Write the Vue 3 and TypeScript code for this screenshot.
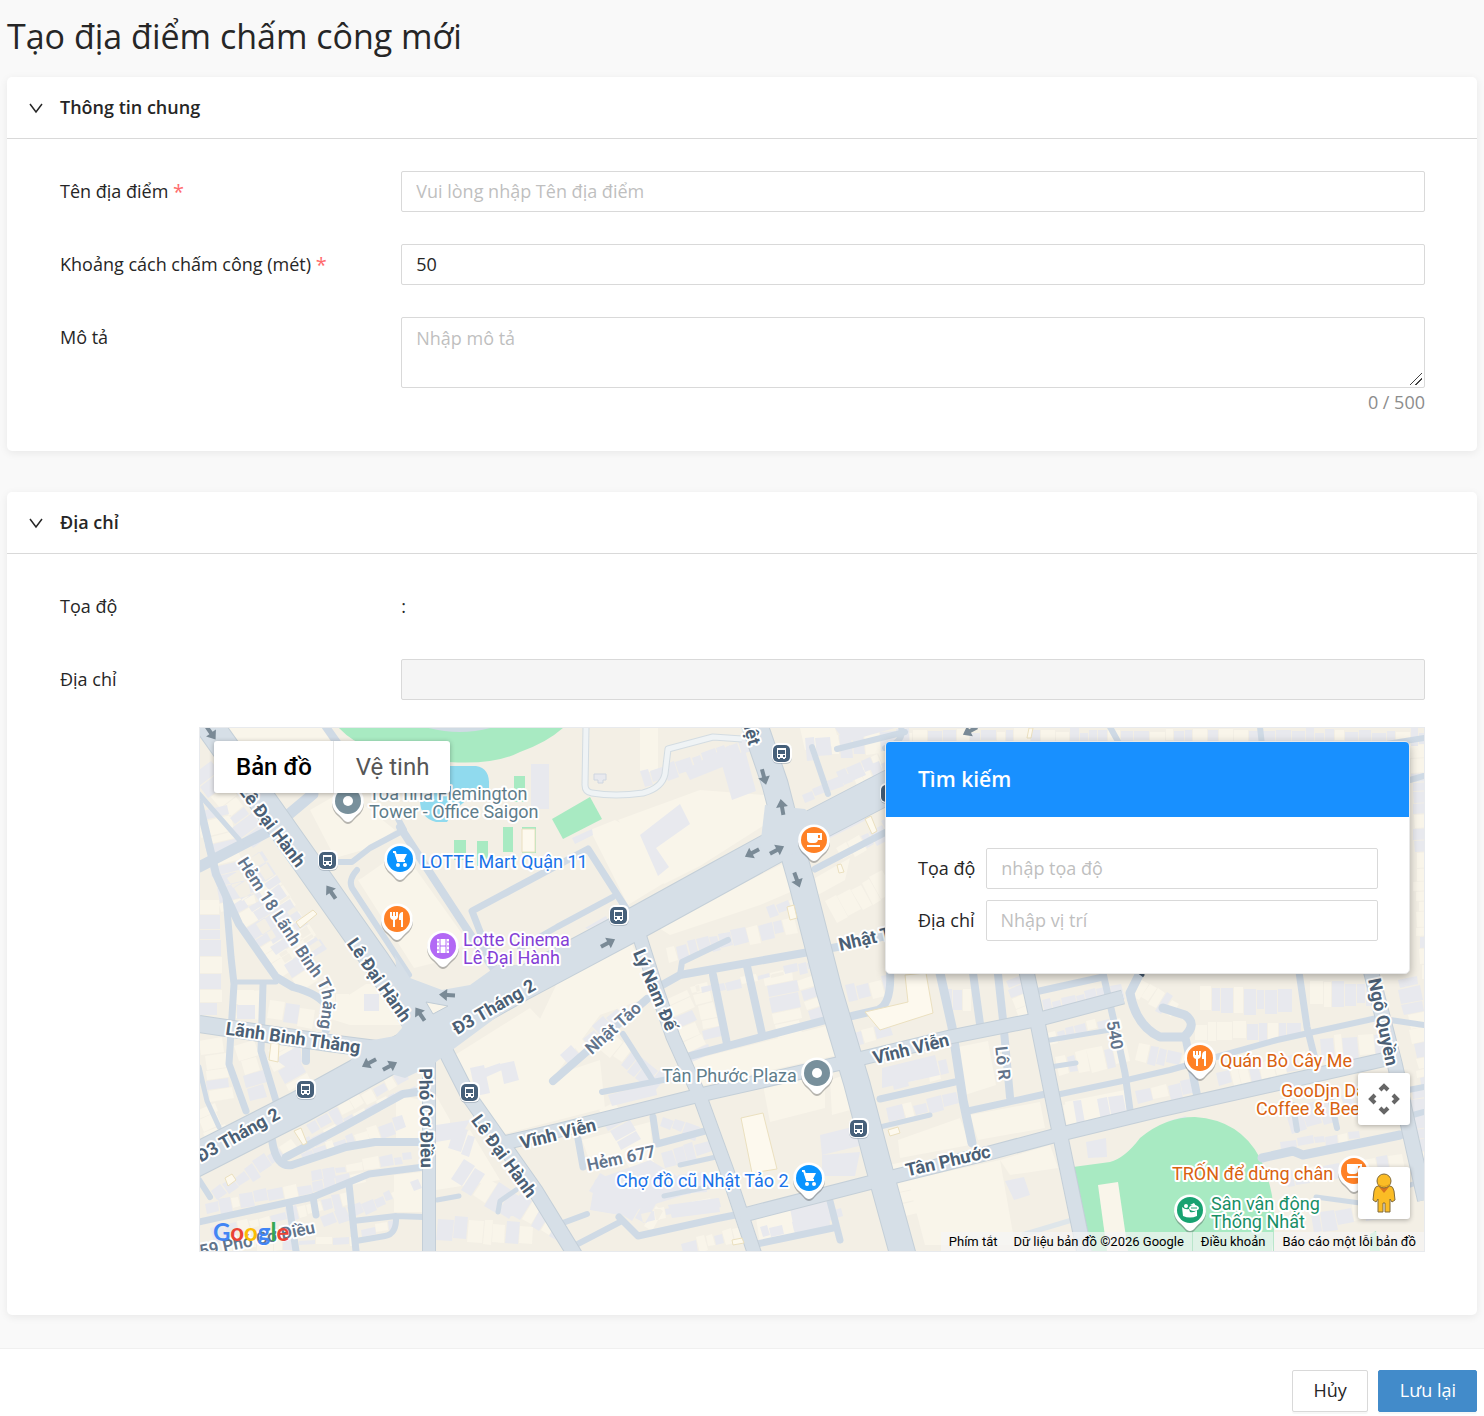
<script setup lang="ts">
import { computed, ref } from 'vue'

type Kind = 'place' | 'cart' | 'fork' | 'film' | 'cup' | 'stadium'

interface Street { d: string; w: number }
interface Label { t: string; x: number; y: number; r: number; c?: string }
interface Pin { x: number; y: number; kind: Kind }

const generalOpen = ref(true)
const addressOpen = ref(true)
const placeName = ref('')
const distance = ref('50')
const description = ref('')
const address = ref('')
const searchCoordinates = ref('')
const searchAddress = ref('')
const mapType = ref<'map' | 'satellite'>('map')
const counter = computed(() => `${description.value.length} / 500`)

/* Small streets */
const lanes: Street[] = [
  { d: 'M199 867L269 831L313 794', w: 11 },
  { d: 'M199 794L242 843', w: 5 },
  { d: 'M199 803L216 874L239 924L276 977L293 987Q320 994 328 1008L326 1030', w: 8 },
  { d: 'M226 897L231 957L234 984L229 1064L246 1111', w: 7 },
  { d: 'M236 982L276 982', w: 5 },
  { d: 'M263 984L261 1051L276 1101', w: 7 },
  { d: 'M306 1043L306 1061', w: 8 },
  { d: 'M199 1067L207 1101L219 1127', w: 5 },
  { d: 'M326 727L360 775', w: 8 },
  { d: 'M339 862L352 862L370 848L404 830L396 815', w: 6 },
  { d: 'M400 827L472 937L498 975', w: 8 },
  { d: 'M357 870Q348 880 352 888L409 975', w: 6 },
  { d: 'M495 970L472 911L500 896L588 849L627 910', w: 7 },
  { d: 'M520 948L557 927L613 897', w: 6 },
  { d: 'M837 749L905 732', w: 6 },
  { d: 'M812 747L828 794', w: 6 },
  { d: 'M815 869L888 831', w: 7 },
  { d: 'M655 989L680 975L843 946L890 935', w: 8 },
  { d: 'M680 975L682 962L728 940', w: 6 },
  { d: 'M713 975L727 1044', w: 8 },
  { d: 'M747 966L762 1034', w: 8 },
  { d: 'M690 1056L830 1019M852 1016L878 1010Q892 1004 890 970', w: 8 },
  { d: 'M553 1081L647 999', w: 8 },
  { d: 'M623 1034L653 1081M602 1092L668 1079', w: 6 },
  { d: 'M578 1139L583 1167M653 1117L657 1144L705 1131', w: 7 },
  { d: 'M680 1165L716 1157M664 1196L712 1186', w: 5 },
  { d: 'M560 1224L587 1214M572 1247L620 1222', w: 6 },
  { d: 'M619 1217L638 1236L715 1219L740 1214', w: 7 },
  { d: 'M757 1244L833 1228M830 1201L840 1240', w: 7 },
  { d: 'M286 1157L343 1127L403 1094L424 1091', w: 8 },
  { d: 'M272 1140Q276 1168 292 1165L346 1147L375 1142L424 1142', w: 8 },
  { d: 'M199 1222L313 1197L369 1174L424 1167', w: 7 },
  { d: 'M289 1204L296 1251M313 1197L316 1215M349 1184L356 1251', w: 7 },
  { d: 'M353 1221L396 1216L424 1217M396 1216Q397 1234 385 1236L356 1241', w: 6 },
  { d: 'M199 1180L210 1197', w: 6 },
  { d: 'M437 1200L459 1196M516 1190L500 1201L498 1212', w: 5 },
  { d: 'M940 973L952 1027L963 1100L972 1143', w: 9 },
  { d: 'M973 973L980 1024', w: 8 },
  { d: 'M997 965L1003 1020L1010 1097', w: 8 },
  { d: 'M880 1099L955 1082M968 1111L1050 1093', w: 7 },
  { d: 'M880 1127L930 1115', w: 5 },
  { d: 'M1035 992L1103 977', w: 7 },
  { d: 'M1100 960L1113 1017L1125 1073L1130 1110', w: 7 },
  { d: 'M1050 1040L1110 1030M1050 1067L1076 1063', w: 5 },
  { d: 'M1056 1095L1127 1080L1170 1070L1227 1054L1277 1040L1377 1018L1424 1025', w: 6 },
  { d: 'M1144 965L1130 993Q1136 1026 1160 1037L1184 1037Q1198 1024 1185 1015L1163 1008', w: 9 },
  { d: 'M1186 1040L1198 1100', w: 8 },
  { d: 'M1298 965L1307 1027L1317 1067', w: 7 },
  { d: 'M1262 1158L1293 1151L1303 1155L1400 1135', w: 9 },
  { d: 'M1316 1197L1360 1203L1424 1180', w: 5 },
  { d: 'M1293 1105L1297 1130M1330 1098L1337 1128', w: 6 },
  { d: 'M1398 1092L1424 1087M1402 1118L1424 1112', w: 6 },
  { d: 'M885 748Q905 742 901 727', w: 6 },
  { d: 'M1110 727L1120 745M1260 727L1262 745M1350 750L1424 738M1410 780L1424 776', w: 6 },
]

/* Through streets, drawn with an edge line */
const avenues: Street[] = [
  { d: 'M199 1024L329 1043L400 1052', w: 16 },
  { d: 'M440 1040L468 1095L535 1190L575 1255', w: 14 },
  { d: 'M429 1045L429 1255', w: 12 },
  { d: 'M495 1145L560 1130L700 1095L850 1061L950 1037L1040 1019L1123 997', w: 13 },
  { d: 'M636 925L655 985L673 1037L700 1097L727 1171L755 1255', w: 13 },
  { d: 'M740 1216L880 1180L993 1152L1057 1135L1160 1110L1400 1056', w: 13 },
  { d: 'M1024 960L1037 1020L1057 1120L1085 1255', w: 14 },
  { d: 'M1368 960L1395 1065L1407 1120L1425 1200', w: 14 },
  { d: 'M190 698L306 862L375 960L425 1035', w: 27 },
  { d: 'M190 1163L300 1107L400 1052L520 985L640 921L720 877L800 833L900 781', w: 32 },
  { d: 'M753 720L775 784L789 838L802 884L829 990L857 1084L878 1164L903 1255', w: 25 },
]

/* Repeatable pseudo-random sequence for the building lots */
function sequence(seed: number) {
  let s = seed
  return () => {
    s = (s * 16807) % 2147483647
    return s / 2147483647
  }
}

/* Rows of lots: from x1,y1 to x2,y2, then depth and seed */
const rows: number[][] = [
  [199, 812, 222, 905, -34, 3], [232, 905, 270, 968, -26, 5], [244, 862, 306, 960, -24, 7], [246, 866, 318, 978, 24, 8],
  [262, 850, 322, 938, 20, 9], [212, 760, 262, 826, 26, 11], [199, 900, 199, 1010, -24, 12], [238, 990, 238, 1020, -18, 13],
  [270, 1000, 310, 1006, 24, 14], [203, 1040, 212, 1100, -22, 15], [236, 1045, 252, 1100, -20, 16], [268, 1050, 290, 1090, -24, 17],
  [199, 1110, 216, 1150, -20, 18], [326, 990, 366, 990, 26, 19], [305, 1122, 400, 1070, 16, 21], [300, 1140, 405, 1086, 13, 22],
  [300, 1150, 410, 1112, 17, 23], [310, 1168, 410, 1150, 15, 24], [210, 1190, 280, 1142, 18, 25], [204, 1200, 350, 1172, 18, 26],
  [210, 1226, 345, 1192, 17, 27], [320, 1216, 415, 1178, 17, 28], [360, 1226, 390, 1220, 14, 29], [204, 1240, 350, 1235, 14, 30],
  [560, 1055, 620, 1000, 20, 31], [600, 1045, 650, 1085, -20, 32], [665, 1000, 690, 1055, -24, 33], [695, 985, 708, 1040, -16, 34],
  [665, 945, 790, 915, 20, 35], [690, 985, 830, 955, 14, 36], [768, 975, 778, 1025, -28, 37], [800, 980, 812, 1015, -20, 38],
  [600, 1110, 640, 1180, -22, 39], [665, 1112, 700, 1125, 18, 40], [660, 1150, 712, 1136, 20, 41], [640, 1175, 700, 1170, 24, 42],
  [640, 1210, 715, 1195, 16, 43], [510, 1210, 560, 1240, -20, 44], [590, 1190, 650, 1225, -24, 45], [680, 1240, 740, 1225, 18, 46],
  [890, 1070, 945, 1058, 20, 47], [886, 1108, 950, 1092, 18, 48], [945, 985, 965, 985, 30, 49], [1008, 980, 1020, 1010, -18, 50],
  [1042, 1000, 1110, 985, 22, 51], [1046, 1030, 1110, 1015, 16, 52], [1055, 1055, 1115, 1042, 26, 53], [1062, 1100, 1120, 1090, 36, 54],
  [1140, 1040, 1185, 1050, 22, 55], [1200, 985, 1290, 985, 30, 56], [1195, 1020, 1295, 1020, 22, 57], [1140, 975, 1180, 1000, 22, 58],
  [1310, 980, 1370, 980, 28, 59], [1320, 1035, 1380, 1030, 28, 60], [1215, 1070, 1300, 1050, 22, 61], [1135, 1090, 1180, 1080, 18, 62],
  [1285, 1110, 1350, 1090, 26, 63], [1280, 1140, 1350, 1130, 14, 64], [1285, 1170, 1395, 1152, 20, 65], [1310, 1210, 1400, 1195, 24, 66],
  [1400, 980, 1422, 1080, -22, 67], [1412, 1090, 1424, 1170, -16, 68], [805, 735, 900, 728, 26, 69], [835, 770, 885, 748, 18, 70],
  [800, 790, 880, 760, 16, 71], [835, 845, 890, 815, 22, 72], [825, 900, 880, 870, 30, 73], [900, 728, 1420, 728, 18, 74],
  [1412, 745, 1422, 970, -20, 75], [890, 1165, 900, 1210, -20, 76], [455, 1070, 500, 1060, 30, 77], [440, 1120, 470, 1130, 28, 78],
  [438, 1170, 500, 1210, -24, 79], [438, 1215, 530, 1222, 26, 80], [760, 1225, 830, 1208, 16, 81], [640, 770, 740, 738, 20, 82],
  [765, 905, 790, 895, 18, 84], [845, 985, 885, 975, 20, 85], [850, 1030, 880, 1022, 22, 86],
]

function buildLots() {
  const cream: string[] = []
  const grey: string[] = []
  for (const [x1, y1, x2, y2, depth, seed] of rows) {
    const next = sequence(seed * 7919)
    const length = Math.hypot(x2 - x1, y2 - y1)
    const ux = (x2 - x1) / length
    const uy = (y2 - y1) / length
    let at = 0
    while (at < length) {
      const w = 7 + Math.round(next() * 9)
      const start = Math.round(next() * 5)
      const end = depth - Math.sign(depth) * Math.round(next() * 6)
      const point = (a: number, b: number) => `${Math.round(x1 + ux * a - uy * b)} ${Math.round(y1 + uy * a + ux * b)}`
      const d = `M${point(at, start)}L${point(at + w, start)}L${point(at + w, end)}L${point(at, end)}Z`
      if (next() < 0.6) grey.push(d)
      else cream.push(d)
      at += w + 1
    }
  }
  return { cream: cream.join(''), grey: grey.join('') }
}
const lots = buildLots()

/* Large building plots */
const plots = [
  'M220 728L322 728L352 775L252 775Z', 'M310 810L345 790L395 830L370 848L335 858Z', 'M362 878L402 850L468 942L438 962L414 968L358 880Z',
  'M590 830L615 820L695 864L628 905Z', 'M618 820L700 790L765 795L769 822L700 866L664 884Z', 'M640 728L658 728L658 772L640 772Z',
  'M560 977L630 940L655 995L600 1015L553 1078L530 1040Z', 'M455 1055L530 1008L560 1040L550 1110L500 1135L478 1105L446 1048Z',
  'M500 1140L540 1080L600 1060L605 1108L500 1135Z', 'M659 928L740 885L782 864L795 890L760 905L670 935Z', 'M692 1060L830 1025L838 1055L700 1086Z',
  'M763 1085L825 1072L825 1108L770 1122Z', 'M830 1080L842 1076L850 1110L832 1115Z', 'M582 1140L650 1122L652 1145L590 1162Z',
  'M756 1218L792 1208L796 1235L760 1243Z', 'M958 1047L988 1041L996 1085L965 1095Z', 'M970 1115L1040 1102L1045 1128L978 1140Z',
  'M908 1180L1000 1160L1015 1245L925 1245Z', 'M1000 1160L1050 1145L1058 1168L1010 1175Z', 'M1065 1102L1125 1090L1130 1110L1068 1128Z',
  'M898 1140L960 1118L970 1145L900 1158Z', 'M815 878L850 858L845 880L816 896Z', 'M240 992L262 990L262 1020L236 1018Z',
  'M366 984L396 984L402 1025L350 1025L318 1015Z', 'M394 1175L422 1172L422 1212L394 1212Z', 'M396 1095L422 1100L422 1138L396 1138Z',
  'M404 1065L418 1064L450 1120L450 1150L436 1160L436 1080Z', 'M436 1145L470 1130L500 1180L436 1190Z', 'M800 728L835 728L840 745L805 750Z',
]
const greyPlots = [
  'M640 835L680 804L690 824L656 848L669 867L658 876Z', 'M722 765L745 750L756 791L732 800Z', 'M685 770L730 745L730 764L690 780Z', 'M531 764L549 764L549 809L531 809Z',
  'M608 1095L655 1083L657 1095L612 1106Z', 'M820 1135L860 1125L863 1145L822 1155Z', 'M822 1155L860 1152L855 1176L822 1176Z',
  'M882 1068L935 1055L940 1075L882 1088Z', 'M790 1208L828 1201L830 1225L795 1235Z', 'M595 1180L650 1160L700 1190L620 1215L590 1210Z',
  'M668 1205L718 1198L720 1212L672 1218Z', 'M1086 1142L1106 1138L1107 1157L1088 1158Z', 'M1005 1181L1024 1177L1030 1195L1014 1200Z', 'M1240 1155L1251 1149L1261 1160L1256 1170Z',
  'M818 830L866 807L870 818L826 840Z', 'M835 728L895 728L845 742Z', 'M572 838L592 829L593 835L575 844Z', 'M480 1070L500 1063L502 1070L484 1078Z',
  'M280 1056L300 1045L302 1062L290 1070L276 1060Z', 'M436 1125L470 1120L460 1138L436 1142Z', 'M1168 1121L1186 1116L1187 1120L1170 1124Z', 'M585 928L606 916L608 920L588 929Z',
]
const landmarks = [
  'M741 1118L763 1113L777 1169L752 1173Z', 'M865 1012L908 1002L905 975L926 973L933 1013L880 1030Z', 'M296 922L313 910L317 914L300 928Z', 'M522 829L535 829L535 852L522 852Z',
  'M271 1043L279 1044L278 1062L269 1060Z', 'M865 819L871 816L877 831L872 834Z', 'M787 907L794 905L797 918L790 920Z', 'M837 865L841 864L844 872L839 873Z', 'M225 1178L232 1174L236 1180L228 1186Z',
  'M294 1131L301 1128L307 1143L303 1145Z', 'M1029 728L1033 728L1031 738L1027 738Z', 'M732 1240L742 1238L744 1243L733 1245Z', 'M888 1130L898 1127L900 1133L890 1136Z',
]

const arrows: number[][] = [
  [211, 733, 55], [331, 892, -125], [764, 777, 75], [782, 807, -100], [752, 853, 152], [777, 850, -28], [797, 880, 70],
  [608, 943, -28], [447, 995, 183], [420, 1014, -125], [369, 1063, 152], [390, 1066, -28], [970, 731, 152],
]
const buses: number[][] = [[328, 860], [782, 753], [619, 915], [306, 1089], [470, 1092], [859, 1128], [890, 793]]

const streetNames: Label[] = [
  { t: 'Lê Đại Hành', x: 272, y: 826, r: 53 },
  { t: 'Lê Đại Hành', x: 379, y: 980, r: 55 },
  { t: 'Lê Đại Hành', x: 504, y: 1156, r: 54 },
  { t: 'Lãnh Binh Thăng', x: 293, y: 1038, r: 8 },
  { t: 'Đ3 Tháng 2', x: 494, y: 1007, r: -30 },
  { t: 'Đ3 Tháng 2', x: 238, y: 1135, r: -29 },
  { t: 'Phó Cơ Điều', x: 426, y: 1118, r: 89 },
  { t: 'Vĩnh Viễn', x: 558, y: 1134, r: -14 },
  { t: 'Vĩnh Viễn', x: 911, y: 1049, r: -14 },
  { t: 'Tân Phước', x: 948, y: 1161, r: -13 },
  { t: 'Lý Nam Đế', x: 655, y: 990, r: 67 },
  { t: 'Nhật Tảo', x: 874, y: 937, r: -13 },
  { t: 'Ngô Quyền', x: 1383, y: 1022, r: 78 },
  { t: 'Lý Thường Kiệt', x: 739, y: 686, r: 75 },
  { t: 'Hẻm 677', x: 621, y: 1158, r: -12, c: 'lane' },
  { t: 'Nhật Tảo', x: 613, y: 1028, r: -42, c: 'lane' },
  { t: 'Lô R', x: 1003, y: 1063, r: 84, c: 'lane' },
  { t: '540', x: 1115, y: 1035, r: 80, c: 'lane' },
  { t: '59 Phó Cơ Điều', x: 257, y: 1239, r: -12, c: 'lane' },
]

const pins: Pin[] = [
  { x: 348, y: 801, kind: 'place' }, { x: 400, y: 859, kind: 'cart' }, { x: 397, y: 919, kind: 'fork' },
  { x: 443, y: 946, kind: 'film' }, { x: 814, y: 840, kind: 'cup' }, { x: 817, y: 1073, kind: 'place' },
  { x: 809, y: 1178, kind: 'cart' }, { x: 1200, y: 1058, kind: 'fork' }, { x: 1354, y: 1171, kind: 'cup' },
  { x: 1190, y: 1210, kind: 'stadium' },
]

const poiNames = [
  { t: 'Tòa nhà Flemington', x: 369, y: 800, c: 'slate' }, { t: 'Tower - Office Saigon', x: 369, y: 818, c: 'slate' },
  { t: 'LOTTE Mart Quận 11', x: 421, y: 868, c: 'shop' }, { t: 'Lotte Cinema', x: 463, y: 946, c: 'cinema' },
  { t: 'Lê Đại Hành', x: 463, y: 964, c: 'cinema' }, { t: 'Tân Phước Plaza', x: 662, y: 1082, c: 'slate' },
  { t: 'Chợ đồ cũ Nhật Tảo 2', x: 616, y: 1187, c: 'shop' }, { t: 'Quán Bò Cây Me', x: 1220, y: 1067, c: 'food' },
  { t: 'GooDjn Dalat', x: 1281, y: 1097, c: 'food' }, { t: 'Coffee & Beer', x: 1256, y: 1115, c: 'food' },
  { t: 'TRỐN để dừng chân', x: 1172, y: 1180, c: 'food' }, { t: 'Sân vận động', x: 1211, y: 1210, c: 'sport' },
  { t: 'Thống Nhất', x: 1211, y: 1228, c: 'sport' },
]
</script>

<template>
  <form class="page" @submit.prevent>
    <main class="content">
      <h1>Tạo địa điểm chấm công mới</h1>

      <section class="card">
        <button type="button" class="card-head" :aria-expanded="generalOpen" @click="generalOpen = !generalOpen">
          <svg class="chevron" viewBox="0 0 14 14" aria-hidden="true"><path d="M1 4L7 12L13 4" /></svg>
          <span>Thông tin chung</span>
        </button>
        <div v-show="generalOpen" class="card-body general">
          <div class="row">
            <label for="name">Tên địa điểm <span class="required">*</span></label>
            <input id="name" v-model="placeName" type="text" required placeholder="Vui lòng nhập Tên địa điểm" />
          </div>
          <div class="row">
            <label for="distance">Khoảng cách chấm công (mét) <span class="required">*</span></label>
            <input id="distance" v-model="distance" type="text" inputmode="numeric" required />
          </div>
          <div class="row">
            <label for="description">Mô tả</label>
            <div class="area">
              <textarea id="description" v-model="description" maxlength="500" placeholder="Nhập mô tả"></textarea>
              <span class="counter">{{ counter }}</span>
            </div>
          </div>
        </div>
      </section>

      <section class="card">
        <button type="button" class="card-head" :aria-expanded="addressOpen" @click="addressOpen = !addressOpen">
          <svg class="chevron" viewBox="0 0 14 14" aria-hidden="true"><path d="M1 4L7 12L13 4" /></svg>
          <span>Địa chỉ</span>
        </button>
        <div v-show="addressOpen" class="card-body place">
          <div class="row">
            <span class="term">Tọa độ</span>
            <span class="term">:</span>
          </div>
          <div class="row">
            <label for="address">Địa chỉ</label>
            <input id="address" v-model="address" type="text" disabled />
          </div>

          <div class="map">
            <svg class="canvas" viewBox="200 728 1224 523" preserveAspectRatio="xMidYMid slice" role="img" aria-label="Bản đồ">
              <rect x="0" y="600" width="1700" height="800" fill="#f3efe5" />
              <path :d="plots.join('')" fill="#f9f5ea" />
              <path :d="lots.cream" fill="#f9f5ea" />
              <path :d="lots.grey" fill="#e8e9ee" />
              <path :d="greyPlots.join('')" fill="#e8e9ee" />
              <g fill="#a8eac2">
                <path d="M338 727Q352 742 369 747L449 762Q495 765 520 752Q548 742 564 727Z" />
                <path d="M552 819L590 797L602 819L563 839Z" />
                <path d="M514 776h11v26h-11zM503 827h10v25h-10zM522 827h14v26h-14zM454 840h12v20h-12zM477 841h11v25h-11z" />
                <path d="M1073 1167L1110 1162Q1125 1158 1140 1138Q1165 1117 1195 1117Q1240 1120 1260 1158Q1280 1200 1272 1251L1092 1251Z" />
                <path d="M1370 1234L1376 1231L1380 1251L1370 1251Z" />
              </g>
              <path d="M425 727Q460 737 494 727Z" fill="#d0dbe4" />
              <path d="M450 766H476Q490 768 489 786V792Q462 796 447 822H436Q420 818 420 800L430 780Z" fill="#90daee" />
              <path d="M1098 1185L1118 1182L1128 1251L1107 1251Z" fill="#f9f5ea" />
              <g fill="none" stroke-linejoin="round">
                <path d="M586 727L585 785Q585 792 592 793Q615 797 643 793Q662 788 665 774L668 749L713 737L742 739" stroke="#d3dce2" stroke-width="7" />
                <path d="M586 727L585 785Q585 792 592 793Q615 797 643 793Q662 788 665 774L668 749L713 737L742 739" stroke="#eff3f5" stroke-width="5" />
                <path d="M594 774h12v6h-3v3h-5v-3h-4z" fill="#e8e9ee" stroke="#cfd6e0" />
                <path d="M1022 1235L1072 1220" stroke="#dfe6ea" stroke-width="5" />
                <g stroke="#cfdae5" stroke-linecap="round">
                  <path v-for="(s, i) in lanes" :key="i" :d="s.d" :stroke-width="s.w" />
                </g>
                <g stroke="#c4cfd8">
                  <path v-for="(s, i) in avenues" :key="i" :d="s.d" :stroke-width="s.w + 2" />
                </g>
                <g stroke="#d6dfe7">
                  <path v-for="(s, i) in avenues" :key="i" :d="s.d" :stroke-width="s.w" />
                </g>
              </g>
              <path d="M765 805L805 809L830 834L805 850L783 857L760 848Z" fill="#d6dfe7" />
              <path d="M395 955L410 978L442 990L470 985L498 965L530 965L540 985L432 1065L405 1078L350 1062L362 1042L395 1036L402 1028Z" fill="#d6dfe7" />
              <path d="M426 1002L433 1014L448 1006Z" fill="#f9f5ea" stroke="#c0ccd6" />
              <path :d="landmarks.join('')" fill="#fdf9ee" stroke="#ebe0bf" />

              <g fill="#7a8a96">
                <path v-for="(a, i) in arrows" :key="i" d="M-8 -2H0V-6L8 0L0 6V2H-8Z" :transform="`translate(${a[0]} ${a[1]}) rotate(${a[2]})`" />
              </g>
              <path d="M1136 970L1144 976" stroke="#46596d" stroke-width="3" />

              <g class="street">
                <text v-for="(l, i) in streetNames" :key="i" :class="l.c" y="6" :transform="`translate(${l.x} ${l.y}) rotate(${l.r})`">{{ l.t }}</text>
              </g>
              <path id="alley" d="M237 862L273 918L306 968Q325 990 323 1004L318 1040" fill="none" />
              <g class="street alley"><text class="lane"><textPath href="#alley">Hẻm 18 Lãnh Binh Thăng</textPath></text></g>

              <g v-for="(b, i) in buses" :key="i" :transform="`translate(${b[0]} ${b[1]})`">
                <rect x="-10" y="-9" width="20" height="20" rx="6" fill="#8a98a5" opacity=".5" />
                <rect x="-10" y="-10" width="20" height="20" rx="6" fill="#fff" />
                <rect x="-9" y="-8" width="17" height="17" rx="5" fill="#46607a" />
                <path d="M-5 -5H4V5H3V6H1V5H-2V6H-4V5H-5Z" fill="#fff" />
                <path d="M-4 -3H3V1H-4ZM-4 2H-2V4H-4ZM1 2H3V4H1Z" fill="#46607a" />
              </g>

              <g class="poi">
                <text v-for="p in poiNames" :key="p.t" :x="p.x" :y="p.y" :class="p.c">{{ p.t }}</text>
              </g>

              <g v-for="(p, i) in pins" :key="i" :transform="`translate(${p.x} ${p.y})`" :class="['pin', p.kind]">
                <path class="shade" d="M0 23C-4 23 -5 19 -10 15A16 16 0 1 1 10 15C5 19 4 23 0 23Z" />
                <path class="rim" d="M0 21C-4 21 -5 17 -10 13A16 16 0 1 1 10 13C5 17 4 21 0 21Z" />
                <circle class="disc" r="13" />
                <circle v-if="p.kind === 'place'" r="5" fill="#fff" />
                <g v-else-if="p.kind === 'cart'">
                  <path d="M-7 -7H-5L-2 2H5" fill="none" stroke="#fff" stroke-width="2" />
                  <path d="M-5 -5H7L4 1H-3Z" fill="#fff" />
                  <circle cx="-2" cy="6" r="2" fill="#fff" /><circle cx="5" cy="6" r="2" fill="#fff" />
                </g>
                <g v-else-if="p.kind === 'fork'">
                  <path d="M-6 -7V-2M-3 -7V8M0 -7V-2" fill="none" stroke="#fff" stroke-width="2" />
                  <path d="M-7 -3H1Q1 1 -3 1Q-7 1 -7 -3ZM2 -2Q2 -7 6 -7V8H4V1H2Z" fill="#fff" />
                </g>
                <g v-else-if="p.kind === 'film'">
                  <path d="M-6 -7H6V7H-6Z" fill="#fff" />
                  <path d="M-3 -7V7M3 -7V7M-3 0H3" stroke="#b268f5" stroke-width="1" />
                  <path d="M-5 -5V7M5 -5V7" stroke="#b268f5" stroke-width="1" stroke-dasharray="2 2" />
                </g>
                <g v-else-if="p.kind === 'cup'">
                  <path d="M-7 -7H4V-1Q4 3 0 3H-3Q-7 3 -7 -1ZM-7 5H6V7H-7Z" fill="#fff" />
                  <path d="M4 -6H7V-1H4" fill="none" stroke="#fff" stroke-width="2" />
                </g>
                <g v-else fill="#fff">
                  <path d="M-8 -3Q-5 0 -1 -1L0 2Q4 3 7 0V6Q0 9 -7 6Z" />
                  <circle cx="-4" cy="-4" r="2" /><ellipse cx="4" cy="-2" rx="5" ry="3" />
                  <path d="M0 -5L4 -7L6 -4Z" />
                  <path d="M1 -2H7" stroke="#18a271" />
                </g>
              </g>
            </svg>

            <div class="types">
              <button type="button" :class="{ active: mapType === 'map' }" @click="mapType = 'map'">Bản đồ</button>
              <button type="button" :class="{ active: mapType === 'satellite' }" @click="mapType = 'satellite'">Vệ tinh</button>
            </div>

            <section class="search">
              <h2>Tìm kiếm</h2>
              <div class="search-body">
                <div class="field">
                  <label for="find-coordinates">Tọa độ</label>
                  <input id="find-coordinates" v-model="searchCoordinates" type="text" placeholder="nhập tọa độ" />
                </div>
                <div class="field">
                  <label for="find-address">Địa chỉ</label>
                  <input id="find-address" v-model="searchAddress" type="text" placeholder="Nhập vị trí" />
                </div>
              </div>
            </section>

            <div class="controls">
              <button type="button" aria-label="Điều khiển camera trên bản đồ">
                <svg viewBox="0 0 32 32" width="32" height="32" aria-hidden="true">
                  <path d="M12 7L16 3L20 7M12 25L16 29L20 25M7 12L3 16L7 20M25 12L29 16L25 20" fill="none" stroke="#666" stroke-width="4" />
                </svg>
              </button>
              <button type="button" aria-label="Chế độ xem phố">
                <svg viewBox="0 0 24 40" width="24" height="40" aria-hidden="true">
                  <path d="M6 13H18Q21 13 22 18L23 27L20 29L18 26V39H13V30H11V39H6V26L4 29L1 27L2 18Q3 13 6 13Z" fill="#fbbc25" stroke="#806a3b" />
                  <path d="M7 14H17L12 20Z" fill="#d9731f" />
                  <circle cx="12" cy="8" r="7" fill="#fbbc25" stroke="#806a3b" />
                  <path d="M6 11Q12 16 18 11" fill="none" stroke="#dd9b1a" />
                </svg>
              </button>
            </div>

            <a class="logo" href="#" aria-label="Google"><span class="b">G</span><span class="r">o</span><span class="y">o</span><span class="b">g</span><span class="g">l</span><span class="r">e</span></a>
            <div class="credits">
              <button type="button">Phím tắt</button>
              <span>Dữ liệu bản đồ ©2026 Google</span>
              <a href="#">Điều khoản</a>
              <a href="#">Báo cáo một lỗi bản đồ</a>
            </div>
          </div>
        </div>
      </section>
    </main>

    <footer>
      <button type="button" class="cancel">Hủy</button>
      <button type="submit" class="save">Lưu lại</button>
    </footer>
  </form>
</template>

<style>
body {
  background: #f9f9f9;
}
</style>

<style scoped>
* {
  box-sizing: border-box;
}

.page {
  color: #262626;
  font: 18px/24px 'Open Sans', 'Noto Sans', sans-serif;
}

.page button,
.page input,
.page textarea {
  color: inherit;
  font: inherit;
}

.content {
  padding: 0 7px 33px;
}

h1 {
  margin: 0;
  padding: 12px 0 17px;
  font-size: 34px;
  font-weight: 400;
  line-height: 48px;
}

.card {
  border-radius: 5px;
  background: #fff;
  box-shadow: 0 2px 8px rgba(0, 0, 0, 0.07);
}

.card + .card {
  margin-top: 41px;
}

.card-head {
  display: flex;
  align-items: center;
  gap: 17px;
  width: 100%;
  height: 62px;
  padding: 0 22px 2px;
  border: 0;
  border-bottom: 1px solid #d9d9d9;
  background: none;
  text-align: left;
}

.page .card-head {
  font-weight: 600;
}

.chevron {
  width: 14px;
  height: 14px;
  fill: none;
  stroke: #262626;
  stroke-width: 1.5;
}

.card-body {
  display: flex;
  flex-direction: column;
  gap: 32px;
}

.general {
  padding: 32px 52px 34px 53px;
}

.place {
  padding: 32px 52px 63px 53px;
}

.row {
  display: grid;
  grid-template-columns: 1fr 3fr;
}

.row > label,
.term {
  line-height: 41px;
}

.required {
  color: #ff6b6d;
  font-size: 20px;
  line-height: 18px;
  vertical-align: -1px;
}

input,
textarea {
  display: block;
  width: 100%;
  min-width: 0;
  height: 41px;
  margin: 0;
  padding: 0 14px 1px;
  border: 1px solid #d9d9d9;
  border-radius: 2px;
  background: #fff;
}

textarea {
  height: 71px;
  padding: 8px 14px;
  resize: vertical;
}

textarea::-webkit-resizer {
  background: linear-gradient(135deg, transparent 46%, #444 46% 54%, transparent 54% 70%, #444 70% 78%, transparent 78%) 1px 1px / 12px 12px no-repeat;
}

input:disabled {
  background: #f5f5f5;
}

::placeholder {
  color: #bfbfbf;
  opacity: 1;
}

.area {
  display: flex;
  flex-direction: column;
}

.counter {
  color: #8c8c8c;
  line-height: 29px;
  text-align: right;
}

.map {
  position: relative;
  height: 525px;
  margin: -5px 0 0 139px;
  overflow: hidden;
  border: 1px solid #e8eaed;
  background: #f3efe5;
  font-family: Roboto, sans-serif;
}

.canvas {
  display: block;
  width: 100%;
  height: 100%;
}

.street text {
  fill: #4b5f75;
  stroke: #fff;
  stroke-width: 4px;
  stroke-linejoin: round;
  paint-order: stroke;
  font-size: 18px;
  font-weight: 700;
  text-anchor: middle;
}

.street .lane {
  fill: #62748b;
  font-size: 17px;
  font-weight: 600;
}

.alley text {
  text-anchor: start;
}

.poi text {
  stroke: #fff;
  stroke-width: 4px;
  stroke-linejoin: round;
  paint-order: stroke;
  font-size: 18px;
}

.slate { fill: #607d8b; }
.shop { fill: #1a73e8; }
.cinema { fill: #8440d6; }
.food { fill: #d9620f; }
.sport { fill: #188f66; }

.shade { fill: rgba(60, 64, 67, 0.35); }
.rim { fill: #fff; }
.place .disc { fill: #78909c; }
.cart .disc { fill: #0a94ff; }
.fork .disc,
.cup .disc { fill: #ff8126; }
.film .disc { fill: #b268f5; }
.stadium .disc { fill: #18a271; }

.types {
  position: absolute;
  top: 13px;
  left: 14px;
  display: flex;
  border-radius: 3px;
  background: #fff;
  box-shadow: 0 1px 5px rgba(0, 0, 0, 0.3);
}

.types button {
  height: 52px;
  padding: 0 21px 0 22px;
  border: 0;
  background: none;
  color: #565656;
  font-size: 24px;
}

.types button + button {
  border-left: 1px solid #e6e6e6;
}

.types .active {
  color: #000;
  font-weight: 500;
}

.search {
  position: absolute;
  top: 13px;
  right: 14px;
  width: 525px;
  overflow: hidden;
  border: 1px solid #e8e8e8;
  border-radius: 5px;
  background: #fff;
  box-shadow: 0 3px 10px rgba(0, 0, 0, 0.3);
  font-family: 'Open Sans', 'Noto Sans', sans-serif;
}

.search h2 {
  margin: 0;
  padding: 0 32px;
  background: #1890ff;
  color: #fff;
  font-size: 21px;
  font-weight: 600;
  line-height: 75px;
}

.search-body {
  display: flex;
  flex-direction: column;
  gap: 11px;
  padding: 31px 31px 32px 32px;
}

.field {
  display: flex;
  align-items: center;
  gap: 11px;
}

.field label {
  flex: none;
  padding-bottom: 2px;
}

.controls {
  position: absolute;
  right: 14px;
  bottom: 32px;
  display: flex;
  flex-direction: column;
  gap: 42px;
}

.controls button {
  display: grid;
  place-items: center;
  width: 52px;
  height: 52px;
  padding: 0;
  border: 0;
  border-radius: 3px;
  background: #fff;
  box-shadow: 0 1px 5px rgba(0, 0, 0, 0.3);
}

.logo {
  position: absolute;
  bottom: 1px;
  left: 13px;
  font: 700 24px/36px Lato, sans-serif;
  text-decoration: none;
}

.logo .b { color: #4285f4; }
.logo .r { color: #ea4335; }
.logo .y { color: #fbbc05; }
.logo .g { color: #34a853; }

.credits {
  position: absolute;
  right: 0;
  bottom: 0;
  display: flex;
  background: rgba(245, 245, 245, 0.7);
  color: #000;
  font-size: 13px;
  line-height: 19px;
}

.credits > * {
  padding: 0 8px;
  border: 0;
  background: none;
  color: #000;
  line-height: 19px;
  text-decoration: none;
}

.credits a {
  border-left: 1px solid #b9e6cb;
}

footer {
  display: flex;
  justify-content: flex-end;
  gap: 10px;
  padding: 21px 7px 4px;
  border-top: 1px solid #f0f0f0;
  background: #fff;
}

footer button {
  height: 42px;
  padding: 0 20px 2px 21px;
  border: 1px solid #d9d9d9;
  border-radius: 2px;
  background: #fff;
  box-shadow: 0 2px 0 rgba(0, 0, 0, 0.03);
}

footer .save {
  border-color: #428bca;
  background: #428bca;
  color: #fff;
}
</style>
